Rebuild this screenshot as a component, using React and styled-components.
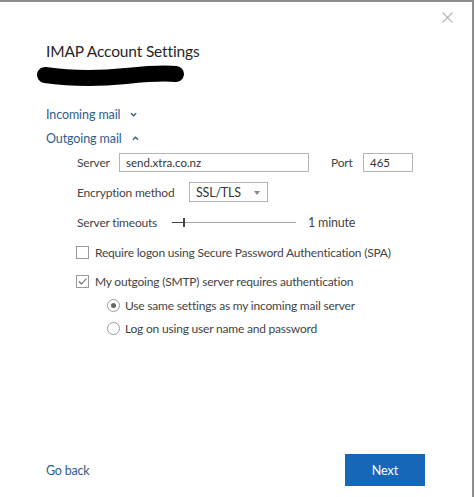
import React from "react";
import styled, { createGlobalStyle } from "styled-components";

const Global = createGlobalStyle`
  html, body { margin: 0; padding: 0; background: #fff; }
  body { font-family: Lato, "Open Sans", sans-serif; color: #333; }
  * { box-sizing: border-box; }
`;

export default function App() {
  const [spa, setSpa] = React.useState(false);
  const [auth, setAuth] = React.useState(true);
  const [mode, setMode] = React.useState("same");

  return (
    <>
      <Global />
      <Dialog>
        <Close aria-label="Close">
          <svg width="11" height="11" viewBox="0 0 11 11">
            <path d="M0.5 0.5 L10.5 10.5 M10.5 0.5 L0.5 10.5" stroke="#b5b5b5" strokeWidth="1.1" />
          </svg>
        </Close>

        <Title>IMAP Account Settings</Title>
        <Scribble width="150" height="26" viewBox="0 0 150 26">
          <path d="M9 13 C 30 16, 60 17, 90 14 S 130 11, 140 12" stroke="#000" strokeWidth="16" strokeLinecap="round" fill="none" />
        </Scribble>

        <Section>
          Incoming mail
          <Chevron viewBox="0 0 8 5"><path d="M1 1 L4 4 L7 1" /></Chevron>
        </Section>
        <Section>
          Outgoing mail
          <Chevron viewBox="0 0 8 5"><path d="M1 4 L4 1 L7 4" /></Chevron>
        </Section>

        <Fields>
          <Row>
            <Label width={42}>Server</Label>
            <TextBox width={190} defaultValue="send.xtra.co.nz" />
            <Label width={32} $offset={22}>Port</Label>
            <TextBox width={50} defaultValue="465" />
          </Row>
          <Row>
            <Label width={112}>Encryption method</Label>
            <Select>
              SSL/TLS
              <Caret />
            </Select>
          </Row>
          <Row>
            <Label width={95}>Server timeouts</Label>
            <Slider>
              <Fill />
              <Thumb />
            </Slider>
            <Value>1 minute</Value>
          </Row>
        </Fields>

        <Options>
          <Check onClick={() => setSpa(!spa)}>
            <Box>{spa && <Tick />}</Box>
            Require logon using Secure Password Authentication (SPA)
          </Check>
          <Check onClick={() => setAuth(!auth)}>
            <Box>{auth && <Tick />}</Box>
            My outgoing (SMTP) server requires authentication
          </Check>
          <Radios>
            <Radio onClick={() => setMode("same")}>
              <Circle>{mode === "same" && <Dot />}</Circle>
              Use same settings as my incoming mail server
            </Radio>
            <Radio onClick={() => setMode("logon")}>
              <Circle>{mode === "logon" && <Dot />}</Circle>
              Log on using user name and password
            </Radio>
          </Radios>
        </Options>

        <Footer>
          <Back>Go back</Back>
          <Next>Next</Next>
        </Footer>
      </Dialog>
    </>
  );
}

function Tick() {
  return (
    <svg width="11" height="11" viewBox="0 0 11 11">
      <path d="M2 5.5 L4.5 8 L9.5 2.5" stroke="#666" strokeWidth="1.1" fill="none" />
    </svg>
  );
}

const Dialog = styled.div`
  position: relative;
  width: 474px;
  height: 497px;
  border-top: 2px solid #8c8c8c;
  border-right: 2px solid #8c8c8c;
  padding: 38px 0 0 46px;
  display: flex;
  flex-direction: column;
  font-size: 12px;
  letter-spacing: -0.2px;
`;

const Close = styled.button`
  position: absolute;
  top: 10px;
  right: 19px;
  padding: 0;
  border: none;
  background: none;
  line-height: 0;
  cursor: pointer;
`;

const Title = styled.h1`
  margin: 0;
  font-size: 15.5px;
  font-weight: 400;
  letter-spacing: -0.15px;
  line-height: 22px;
  color: #262626;
`;

const Scribble = styled.svg`
  display: block;
  margin: 0 0 0 -10px;
  height: 26px;
`;

const Section = styled.div`
  display: flex;
  align-items: center;
  height: 24px;
  color: #2f5d8c;
  font-size: 12.5px;
  letter-spacing: -0.1px;
  &:first-of-type { margin-top: 14px; }
  cursor: pointer;
`;

const Chevron = styled.svg`
  width: 7px;
  height: 5px;
  margin-left: 10px;
  path { stroke: #3a5f88; stroke-width: 1.6; fill: none; }
`;

const Fields = styled.div`
  display: flex;
  flex-direction: column;
  gap: 6px;
  padding-left: 31px;
`;

const Row = styled.div`
  display: flex;
  align-items: center;
  height: 24px;
`;

const Label = styled.span`
  width: ${(p) => p.width}px;
  margin-left: ${(p) => p.$offset || 0}px;
  flex-shrink: 0;
  color: #444;
  white-space: nowrap;
`;

const TextBox = styled.input`
  width: ${(p) => p.width}px;
  height: 19px;
  border: 1px solid #b4b4b4;
  padding: 0 6px;
  font: inherit;
  font-size: 11.5px;
  color: #333;
  outline: none;
`;

const Select = styled.div`
  position: relative;
  width: 79px;
  height: 20px;
  border: 1px solid #b4b4b4;
  padding-left: 6px;
  display: flex;
  align-items: center;
  font-size: 12.5px;
  color: #333;
`;

const Caret = styled.span`
  position: absolute;
  right: 7px;
  top: 8px;
  border-left: 3px solid transparent;
  border-right: 3px solid transparent;
  border-top: 4px solid #888;
`;

const Slider = styled.div`
  position: relative;
  width: 124px;
  height: 1px;
  background: #a6a6a6;
`;

const Fill = styled.div`
  position: absolute;
  left: 0;
  top: 0;
  width: 12px;
  height: 1px;
  background: #444;
`;

const Thumb = styled.div`
  position: absolute;
  left: 11px;
  top: -4px;
  width: 2px;
  height: 9px;
  background: #444;
`;

const Value = styled.span`
  margin-left: 12px;
  font-size: 12.5px;
  color: #444;
`;

const Options = styled.div`
  display: flex;
  flex-direction: column;
  gap: 9px;
  padding-left: 30px;
  margin-top: 8px;
`;

const Check = styled.label`
  display: flex;
  align-items: center;
  height: 20px;
  color: #444;
  cursor: pointer;
`;

const Box = styled.span`
  width: 13px;
  height: 13px;
  border: 1px solid #9a9a9a;
  margin-right: 6px;
  display: flex;
  align-items: center;
  justify-content: center;
`;

const Radios = styled.div`
  display: flex;
  flex-direction: column;
  gap: 3px;
  padding-left: 31px;
  margin-top: -5px;
`;

const Radio = styled(Check)``;

const Circle = styled.span`
  width: 13px;
  height: 13px;
  border: 1px solid #9a9a9a;
  border-radius: 50%;
  margin-right: 5px;
  display: flex;
  align-items: center;
  justify-content: center;
`;

const Dot = styled.span`
  width: 5px;
  height: 5px;
  border-radius: 50%;
  background: #666;
`;

const Footer = styled.div`
  margin-top: auto;
  margin-bottom: 11px;
  display: flex;
  align-items: center;
  justify-content: space-between;
  padding-right: 47px;
`;

const Back = styled.a`
  color: #2f5d8c;
  font-size: 12.5px;
  cursor: pointer;
`;

const Next = styled.button`
  width: 80px;
  height: 32px;
  border: none;
  background: #1767b8;
  color: #fff;
  font: inherit;
  font-size: 12.5px;
  cursor: pointer;
`;
